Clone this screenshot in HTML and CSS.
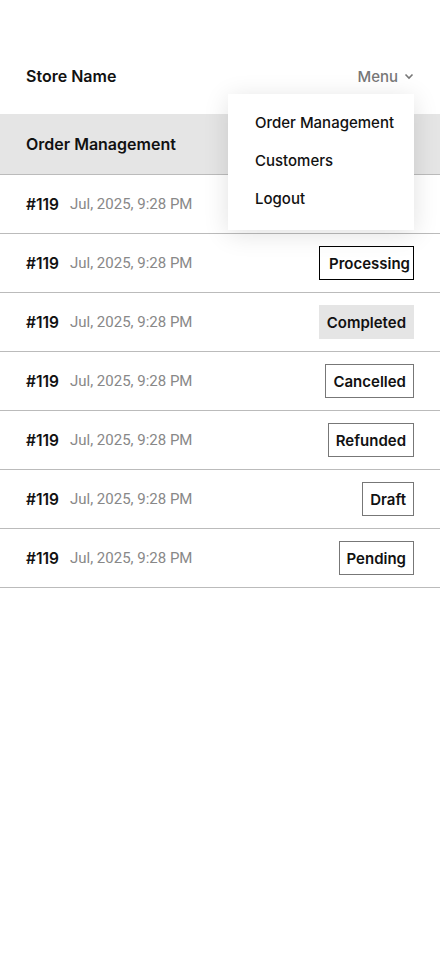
FILE: index.html
```html
<!DOCTYPE html>
<html>
<head>
	<title>Orders</title>
	<link rel="stylesheet" href="styles.css">
</head>
<body>
	<div class="topbar">
		<div class="store">Store Name</div>
		<div class="menu">
			<span class="menulabel">Menu
				<svg width="10" height="10" viewBox="0 0 10 10"><path d="M1.5 3.5 L5 7 L8.5 3.5" fill="none" stroke="#777" stroke-width="1.6"/></svg>
			</span>
			<ul class="dropdown">
				<li>Order Management</li>
				<li>Customers</li>
				<li>Logout</li>
			</ul>
		</div>
	</div>

	<div class="pagetitle">Order Management</div>

	<div class="orders">
		<div class="row">
			<span class="num">#119</span><span class="date">Jul, 2025, 9:28 PM</span>
		</div>
		<div class="row">
			<span class="num">#119</span><span class="date">Jul, 2025, 9:28 PM</span>
			<span class="badge processing">Processing</span>
		</div>
		<div class="row">
			<span class="num">#119</span><span class="date">Jul, 2025, 9:28 PM</span>
			<span class="badge completed">Completed</span>
		</div>
		<div class="row">
			<span class="num">#119</span><span class="date">Jul, 2025, 9:28 PM</span>
			<span class="badge">Cancelled</span>
		</div>
		<div class="row">
			<span class="num">#119</span><span class="date">Jul, 2025, 9:28 PM</span>
			<span class="badge">Refunded</span>
		</div>
		<div class="row">
			<span class="num">#119</span><span class="date">Jul, 2025, 9:28 PM</span>
			<span class="badge">Draft</span>
		</div>
		<div class="row">
			<span class="num">#119</span><span class="date">Jul, 2025, 9:28 PM</span>
			<span class="badge">Pending</span>
		</div>
	</div>
</body>
</html>
```
FILE: styles.css
```css
*{
	box-sizing:border-box;
}

body{
	margin:0;
	font-family:Inter, "Noto Sans", sans-serif;
	color:#111;
	background:#fff;
}

.topbar{
	margin-top:40px;
	height:74px;
	padding:0 26px;
	display:flex;
	align-items:center;
	justify-content:space-between;
}

.store{
	font-size:16px;
	font-weight:600;
	margin-top:-2px;
}

.menu{
	position:relative;
}

.menulabel{
	font-size:15px;
	font-weight:500;
	color:#777;
	display:flex;
	align-items:center;
	gap:6px;
	margin-top:-2px;
}

.dropdown{
	position:absolute;
	top:25px;
	right:0;
	width:186px;
	margin:0;
	padding:10px 0 12px;
	list-style:none;
	background:#fff;
	box-shadow:0 4px 24px rgba(0,0,0,0.12);
	z-index:2;
}

.dropdown li{
	padding:0 27px;
	height:38px;
	line-height:38px;
	font-size:15px;
	font-weight:500;
	white-space:nowrap;
}

.pagetitle{
	height:61px;
	padding:0 26px;
	display:flex;
	align-items:center;
	background:#e5e5e5;
	border-bottom:1px solid #bbb;
	font-size:16px;
	font-weight:600;
}

.row{
	height:59px;
	padding:0 26px;
	display:flex;
	align-items:center;
	border-bottom:1px solid #bbb;
	font-size:15px;
}

.num{
	font-size:15.5px;
	font-weight:600;
	margin-right:11px;
}

.date{
	font-family:Roboto, sans-serif;
	color:#888;
}

.badge{
	margin-left:auto;
	height:34px;
	padding:0 7px;
	display:flex;
	align-items:center;
	border:1px solid #777;
	font-size:15px;
	font-weight:600;
}

.processing{
	border-color:#000;
	padding:0 3px 0 9px;
}

.completed{
	border-color:#e5e5e5;
	background:#e5e5e5;
}
```
